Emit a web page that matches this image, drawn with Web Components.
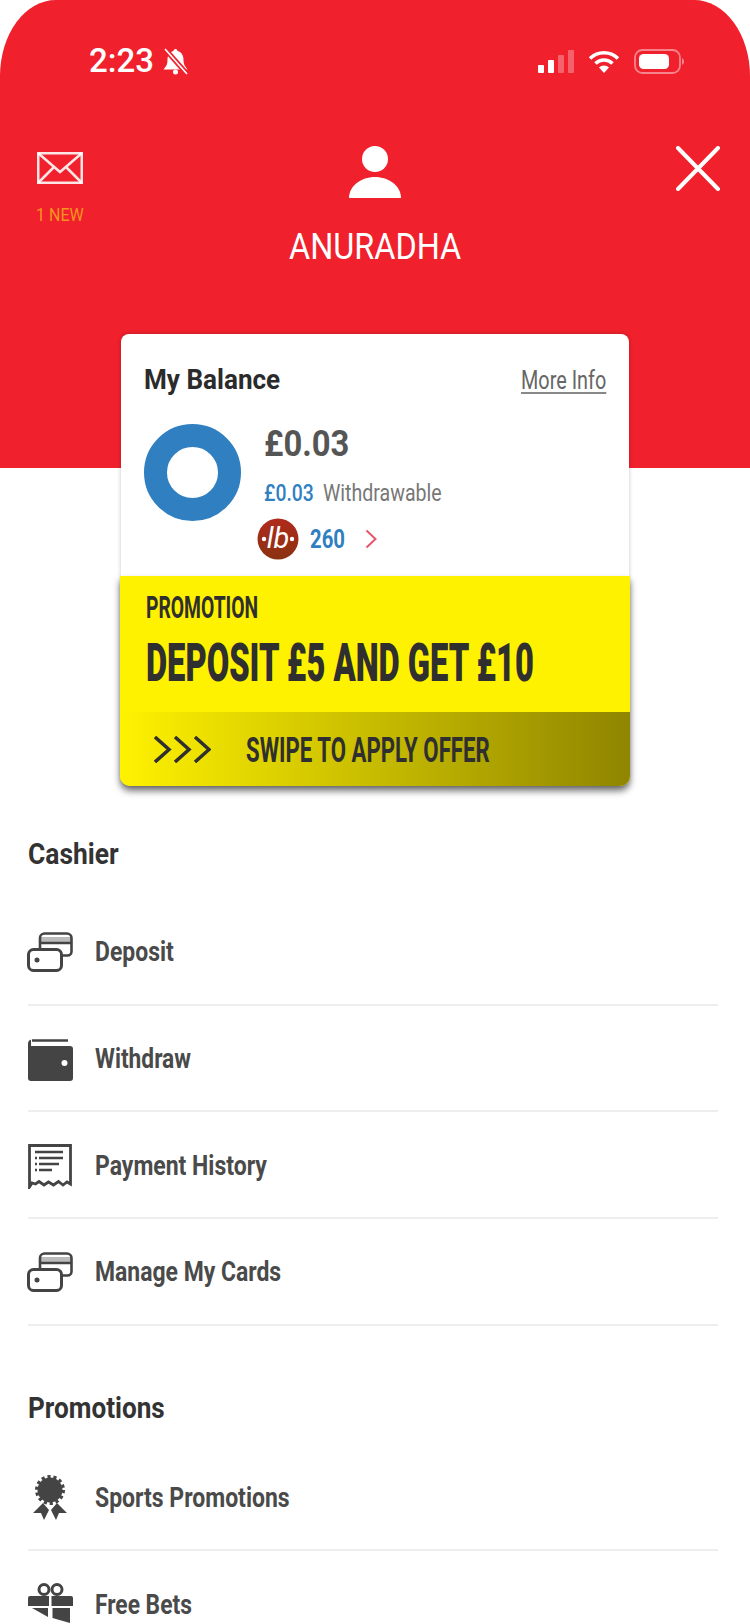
<!DOCTYPE html>
<html lang="en">
<head>
<meta charset="utf-8">
<title>Account menu</title>
<style>
  html, body { margin: 0; background: #fff; }
  body { font-family: Roboto, "Liberation Sans", sans-serif; }
</style>
</head>
<body>
<app-shell>
  <account-header name="ANURADHA"></account-header>
  <balance-card></balance-card>
  <menu-section title="Cashier" w="91">
    <menu-row label="Deposit" w="79" icon="cards"></menu-row>
    <menu-row label="Withdraw" w="96" icon="wallet"></menu-row>
    <menu-row label="Payment History" w="172" icon="receipt"></menu-row>
    <menu-row label="Manage My Cards" w="186" icon="cards"></menu-row>
  </menu-section>
  <menu-section title="Promotions" w="137" class="second">
    <menu-row label="Sports Promotions" w="195" icon="award"></menu-row>
    <menu-row label="Free Bets" w="97" icon="gift"></menu-row>
  </menu-section>
</app-shell>

<script>
// no condensed face is installed, so text is squeezed to the width it has in the reference
class NarrowText extends HTMLElement {
    constructor() {
        super();
        this.attachShadow({mode: 'open'});
        this.shadowRoot.innerHTML = `
            <style>
            :host { display: inline-block; white-space: nowrap; vertical-align: top; }
            span { display: inline-block; transform-origin: 0 50%; }
            </style>
            <span><slot></slot></span>
        `;
    }

    connectedCallback() {
        const w = Number(this.getAttribute('w'));
        const inner = this.shadowRoot.querySelector('span');
        this.style.width = w + 'px';
        inner.style.transform = `scaleX(${w / inner.offsetWidth})`;
    }
}

class AppShell extends HTMLElement {
    constructor() {
        super();
        this.attachShadow({mode: 'open'});
        this.shadowRoot.innerHTML = `
            <style>
            :host { display: block; width: 750px; height: 1624px; overflow: hidden; background: #fff; }
            </style>
            <slot></slot>
        `;
    }
}

class StatusBar extends HTMLElement {
    constructor() {
        super();
        this.attachShadow({mode: 'open'});
        this.shadowRoot.innerHTML = `
            <style>
            :host { display: flex; align-items: center; height: 26px; padding: 48px 66px 0 89px; color: #fff; }
            .time { font: 500 33px/26px Roboto, sans-serif; }
            .bell { margin-left: 9px; }
            .right { margin-left: auto; display: flex; align-items: center; gap: 14px; }
            svg { display: block; }
            </style>
            <narrow-text class="time" w="65">2:23</narrow-text>
            <svg class="bell" width="25" height="27" viewBox="0 0 25 27">
                <path fill="#fff" d="M12.500 1c-1.100 0-2 .8-2 2C6 4 4.500 8 4.500 12c0 4-1 6-4 9.500h24c-3-3.500-4-5.500-4-9.500 0-4-1.500-8-6-9 0-1.200-.9-2-2-2z"/>
                <circle cx="12.500" cy="24" r="2.500" fill="#fff"/>
                <path d="M2 1l22 25" stroke="#f0202c" stroke-width="5"/>
                <path d="M2 1l22 25" stroke="#fff" stroke-width="1.700"/>
            </svg>
            <div class="right">
                <svg width="36" height="23" viewBox="0 0 36 23">
                    <rect x="0" y="15" width="6" height="8" rx="1" fill="#fff"/>
                    <rect x="10" y="10" width="6" height="13" rx="1" fill="#fff"/>
                    <rect x="20" y="5" width="6" height="18" rx="1" fill="#fff" opacity=".3"/>
                    <rect x="30" y="0" width="6" height="23" rx="1" fill="#fff" opacity=".3"/>
                </svg>
                <svg width="32" height="23" viewBox="0 0 32 23" fill="none" stroke="#fff" stroke-width="3.500">
                    <path d="M2 8.500A20 20 0 0 1 30 8.500"/>
                    <path d="M7.500 13.500A12 12 0 0 1 24.500 13.500"/>
                    <path fill="#fff" stroke="none" d="M16 23l-5-5.500a7 7 0 0 1 10 0z"/>
                </svg>
                <svg width="50" height="25" viewBox="0 0 50 25">
                    <rect x="1" y="1" width="45" height="23" rx="7.500" fill="none" stroke="#fff" stroke-opacity=".45" stroke-width="1.800"/>
                    <rect x="5" y="5" width="30" height="15" rx="4.500" fill="#fff"/>
                    <path d="M48 9a4 4 0 0 1 0 7z" fill="#fff" opacity=".45"/>
                </svg>
            </div>
        `;
    }
}

class AccountHeader extends HTMLElement {
    constructor() {
        super();
        this.attachShadow({mode: 'open'});
        this.shadowRoot.innerHTML = `
            <style>
            :host { display: block; height: 468px; background: #f0202c; border-radius: 56px 56px 0 0 / 76px 76px 0 0; color: #fff; }
            .top { display: grid; grid-template-columns: 1fr auto 1fr; padding: 72px 30px 0; }
            .mail { display: flex; flex-direction: column; align-items: center; width: 48px; margin: 6px 0 0 6px; }
            .new { margin-top: 21px; font: 400 19px/20px Roboto, sans-serif; color: #f8931f; }
            .who { display: flex; flex-direction: column; align-items: center; }
            .name { margin-top: 31px; font: 400 36px/36px Roboto, sans-serif; }
            .close { justify-self: end; }
            svg { display: block; }
            </style>
            <status-bar></status-bar>
            <div class="top">
                <div class="mail">
                    <svg width="46" height="32" viewBox="0 0 46 32" fill="none" stroke="#fff" stroke-opacity=".88" stroke-width="2.500">
                        <rect x="1.250" y="1.250" width="43.500" height="29.500"/>
                        <path d="M1 1l22 19L45 1M1 31l16-16M45 31L29 15"/>
                    </svg>
                    <narrow-text class="new" w="48">1 NEW</narrow-text>
                </div>
                <div class="who">
                    <svg width="52" height="52" viewBox="0 0 52 52" fill="#fff">
                        <ellipse cx="26" cy="13" rx="13" ry="13"/>
                        <path d="M0 52C0 40 12 31 26 31s26 9 26 21z"/>
                    </svg>
                    <narrow-text class="name" w="172"></narrow-text>
                </div>
                <svg class="close" width="44" height="45" viewBox="0 0 44 45" stroke="#fff" stroke-width="4" stroke-linecap="round">
                    <path d="M2 2l40 41M42 2L2 43"/>
                </svg>
            </div>
        `;
        this.shadowRoot.querySelector('.name').textContent = this.getAttribute('name');
    }
}

class BalanceCard extends HTMLElement {
    constructor() {
        super();
        this.attachShadow({mode: 'open'});
        this.shadowRoot.innerHTML = `
            <style>
            :host { display: block; width: 508px; margin: -134px 0 0 121px; background: #fff; border-radius: 8px 8px 10px 10px; box-shadow: 0 0 4px rgba(0,0,0,.22); }
            .head { display: flex; justify-content: space-between; height: 30px; padding: 31px 23px 0 23px; line-height: 30px; }
            .title { font-size: 28px; font-weight: 700; color: #2b2b2b; }
            .more { margin-top: 1px; font-size: 25px; color: #666; }
            .more u { text-decoration-color: #888; text-decoration-thickness: 2px; text-underline-offset: 3px; }
            .body { display: flex; height: 152px; padding: 29px 0 0 23px; }
            .donut { width: 97px; height: 97px; flex: none; box-sizing: border-box; border: 23px solid #2f7fc1; border-radius: 50%; }
            .info { margin: 2px 0 0 23px; }
            .amount { font-size: 37px; font-weight: 700; line-height: 36px; color: #555; }
            .line { display: flex; gap: 9px; margin-top: 18px; font-size: 24px; line-height: 26px; }
            .blue { color: #2f7fc1; font-weight: 500; }
            .grey { color: #777; }
            .points { display: flex; align-items: center; margin: 12px 0 0 -7px; }
            .points .blue { margin-left: 11px; font-size: 25px; font-weight: 700; }
            .points svg.chev { margin-left: 20px; }
            svg { display: block; }
            </style>
            <div class="head">
                <narrow-text class="title" w="136">My Balance</narrow-text>
                <narrow-text class="more" w="85"><u>More Info</u></narrow-text>
            </div>
            <div class="body">
                <div class="donut"></div>
                <div class="info">
                    <narrow-text class="amount" w="85">£0.03</narrow-text>
                    <div class="line">
                        <narrow-text class="blue" w="50">£0.03</narrow-text>
                        <narrow-text class="grey" w="119">Withdrawable</narrow-text>
                    </div>
                    <div class="points">
                        <svg width="42" height="42" viewBox="0 0 42 42">
                            <defs>
                                <linearGradient id="lb" x1="0" y1="0" x2="0" y2="1">
                                    <stop offset="0" stop-color="#b02a1c"/>
                                    <stop offset="1" stop-color="#8a3210"/>
                                </linearGradient>
                            </defs>
                            <circle cx="21" cy="21" r="20.500" fill="url(#lb)"/>
                            <text x="21" y="30" text-anchor="middle" fill="#fff" font-family="Roboto, sans-serif" font-style="italic" font-size="29">lb</text>
                            <circle cx="7" cy="21" r="2.200" fill="#fff"/>
                            <circle cx="35" cy="21" r="2.200" fill="#fff"/>
                        </svg>
                        <narrow-text class="blue" w="35">260</narrow-text>
                        <svg class="chev" width="12" height="20" viewBox="0 0 12 20" fill="none" stroke="#e8556b" stroke-width="2">
                            <path d="M1.500 1.500L10.500 10l-9 8.500"/>
                        </svg>
                    </div>
                </div>
            </div>
            <promo-banner></promo-banner>
        `;
    }
}

class PromoBanner extends HTMLElement {
    constructor() {
        super();
        this.attachShadow({mode: 'open'});
        this.shadowRoot.innerHTML = `
            <style>
            :host { display: block; margin: 0 -1px; background: #fff200; color: #2f2f2f; border-radius: 0 0 10px 10px; box-shadow: 0 5px 7px rgba(0,0,0,.55); }
            .top { height: 136px; box-sizing: border-box; padding: 16px 0 0 26px; }
            .label { display: block; font: 700 31px/32px Roboto, sans-serif; }
            .offer { display: block; margin-top: 13px; font: 900 53px/52px Roboto, sans-serif; }
            .swipe { display: flex; align-items: center; gap: 35px; height: 74px; padding-left: 34px; border-radius: 0 0 10px 10px; background: linear-gradient(90deg, #fff200, #8f8500); }
            .swipe narrow-text { margin-top: 3px; font: 700 35px/36px Roboto, sans-serif; }
            svg { display: block; }
            </style>
            <div class="top">
                <narrow-text class="label" w="112">PROMOTION</narrow-text>
                <narrow-text class="offer" w="388">DEPOSIT £5 AND GET £10</narrow-text>
            </div>
            <div class="swipe">
                <svg width="57" height="27" viewBox="0 0 57 27" fill="none" stroke="#2f2f2f" stroke-width="3.500">
                    <path d="M1 1l14 12.500L1 26M21 1l14 12.500L21 26M41 1l14 12.500L41 26"/>
                </svg>
                <narrow-text w="244">SWIPE TO APPLY OFFER</narrow-text>
            </div>
        `;
    }
}

class MenuSection extends HTMLElement {
    constructor() {
        super();
        this.attachShadow({mode: 'open'});
        this.shadowRoot.innerHTML = `
            <style>
            :host { display: block; padding: 0 32px 0 28px; }
            .title { height: 45px; padding: 46px 0 22px; line-height: 45px; font-size: 29px; font-weight: 700; color: #333; }
            :host(.second) .title { padding: 60px 0 14px; }
            </style>
            <div class="title"><narrow-text></narrow-text></div>
            <slot></slot>
        `;
    }

    connectedCallback() {
        const title = this.shadowRoot.querySelector('narrow-text');
        title.setAttribute('w', this.getAttribute('w'));
        title.textContent = this.getAttribute('title');
    }
}

const ICONS = {
    cards: `
        <rect x="1.500" y="20.500" width="33" height="21" rx="5" fill="none" stroke="#444" stroke-width="3"/>
        <circle cx="10" cy="31" r="2.500" fill="#444"/>
        <path d="M13 8h31v5H13z" fill="#bbb"/>
        <path d="M13 19V9a4.500 4.500 0 0 1 4.500-4.500h22.500A4.500 4.500 0 0 1 44.500 9v13.500a4 4 0 0 1-4 4H35M13 14h31" fill="none" stroke="#444" stroke-width="2.600"/>`,
    wallet: `
        <path d="M5 4.500h36" stroke="#444" stroke-width="2.500"/>
        <path d="M1 7a4 4 0 0 1 3-3.500V44A3 3 0 0 1 1 41z" fill="#444"/>
        <rect x="1" y="10" width="45" height="35" rx="3" fill="#444"/>
        <circle cx="37.500" cy="27" r="3" fill="#fff"/>`,
    receipt: `
        <path d="M2.500 44V2.500h41V41l-3.500-2-4 3-4.500-3.500-5 3.500-5-3-4.500 3-5-3.500-3.500 2.500-3.500-1z" fill="none" stroke="#444" stroke-width="2.800"/>
        <path d="M8 9h28M12 15h24M12 21h20M12 27h13M8 15h2M8 21h2M8 27h2" stroke="#444" stroke-width="2.400"/>`,
    award: `
        <circle cx="23" cy="15" r="12.500" fill="#444"/>
        <circle cx="23" cy="15" r="13.500" fill="none" stroke="#444" stroke-width="3" stroke-dasharray="3.200 2.860"/>
        <path d="M6 38l10-10 6 7-5 10-3-7zM40 38L30 28l-6 7 5 10 3-7z" fill="#444"/>`,
    gift: `
        <path d="M1 16a2 2 0 0 1 2-2h19v10H1zM24.500 14H44a2 2 0 0 1 2 2v8H24.500z" fill="#444"/>
        <path d="M5 26h16v9zM25.500 26H43v15l-17.500-5z" fill="#444"/>
        <circle cx="17" cy="7.500" r="5" fill="none" stroke="#444" stroke-width="3"/>
        <circle cx="30" cy="7.500" r="5" fill="none" stroke="#444" stroke-width="3"/>`
};

class MenuRow extends HTMLElement {
    constructor() {
        super();
        this.attachShadow({mode: 'open'});
        this.shadowRoot.innerHTML = `
            <style>
            :host { display: flex; align-items: center; gap: 22px; box-sizing: border-box; height: 106.670px; padding-top: 2px; border-bottom: 2px solid #eee; font-size: 27px; font-weight: 700; color: #4a4a4a; }
            svg { display: block; flex: none; margin-left: -1px; }
            </style>
            <svg width="46" height="46" viewBox="0 0 46 46"></svg>
            <narrow-text></narrow-text>
        `;
    }

    connectedCallback() {
        this.shadowRoot.querySelector('svg').innerHTML = ICONS[this.getAttribute('icon')];
        const label = this.shadowRoot.querySelector('narrow-text');
        label.setAttribute('w', this.getAttribute('w'));
        label.textContent = this.getAttribute('label');
    }
}

customElements.define('app-shell', AppShell);
customElements.define('status-bar', StatusBar);
customElements.define('account-header', AccountHeader);
customElements.define('balance-card', BalanceCard);
customElements.define('promo-banner', PromoBanner);
customElements.define('menu-section', MenuSection);
customElements.define('menu-row', MenuRow);
// last, so the fonts of the parents are in place when it measures
customElements.define('narrow-text', NarrowText);
</script>
</body>
</html>
